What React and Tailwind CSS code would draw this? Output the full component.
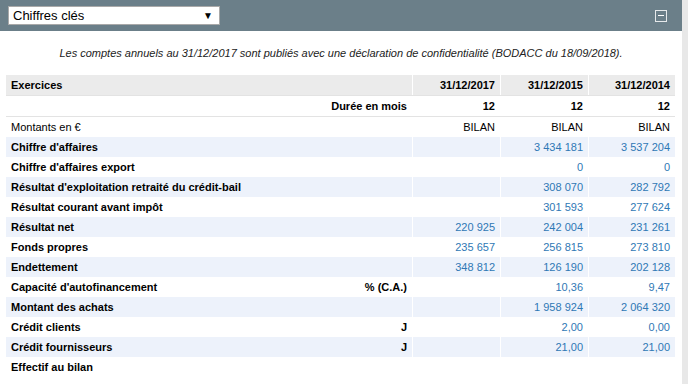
import React from "react";

const rows = [
  { label: "Chiffre d'affaires", unit: "", v: ["", "3 434 181", "3 537 204"], blue: true },
  { label: "Chiffre d'affaires export", unit: "", v: ["", "0", "0"], blue: false },
  { label: "Résultat d'exploitation retraité du crédit-bail", unit: "", v: ["", "308 070", "282 792"], blue: true },
  { label: "Résultat courant avant impôt", unit: "", v: ["", "301 593", "277 624"], blue: false },
  { label: "Résultat net", unit: "", v: ["220 925", "242 004", "231 261"], blue: true },
  { label: "Fonds propres", unit: "", v: ["235 657", "256 815", "273 810"], blue: false },
  { label: "Endettement", unit: "", v: ["348 812", "126 190", "202 128"], blue: true },
  { label: "Capacité d'autofinancement", unit: "% (C.A.)", v: ["", "10,36", "9,47"], blue: false },
  { label: "Montant des achats", unit: "", v: ["", "1 958 924", "2 064 320"], blue: true },
  { label: "Crédit clients", unit: "J", v: ["", "2,00", "0,00"], blue: false },
  { label: "Crédit fournisseurs", unit: "J", v: ["", "21,00", "21,00"], blue: true },
];

export default function App() {
  return (
    <div
      className="flex w-[688px] h-[384px] overflow-hidden bg-white text-[11px] text-black"
      style={{ fontFamily: '"Liberation Sans", Arial, sans-serif' }}
    >
      <div className="w-[682px] flex flex-col">
        <div className="h-[31px] bg-[#6b7f89] flex items-center justify-between pl-[8px] pr-[15px]">
          <div className="w-[212px] h-[19px] bg-white border border-[#a9a9a9] flex items-center justify-between pl-[4px] pr-[6px]">
            <span className="text-[13px] leading-none">Chiffres clés</span>
            <span className="text-[10px] leading-none">▼</span>
          </div>
          <div className="w-[12px] h-[12px] border border-[#e6e9eb] flex items-center justify-center">
            <div className="w-[6px] h-[1px] bg-white"></div>
          </div>
        </div>
        <div className="h-[44px] flex items-center justify-center italic text-[11px] text-[#222]">
          Les comptes annuels au 31/12/2017 sont publiés avec une déclaration de confidentialité (BODACC du 18/09/2018).
        </div>
        <div className="ml-[6px] w-[669px] flex flex-col">
          <div className="grid grid-cols-[406px_88px_88px_87px] h-[20px] bg-[#ebebeb] font-bold">
            <div className="pl-[5px] flex items-center">Exercices</div>
            <div className="border-l border-white pr-[5px] flex items-center justify-end">31/12/2017</div>
            <div className="border-l border-white pr-[5px] flex items-center justify-end">31/12/2015</div>
            <div className="border-l border-white pr-[5px] flex items-center justify-end">31/12/2014</div>
          </div>
          <div className="grid grid-cols-[406px_88px_88px_87px] h-[21px] border-t border-[#e3e3e3] font-bold">
            <div className="pr-[5px] flex items-center justify-end">Durée en mois</div>
            <div className="pr-[5px] flex items-center justify-end">12</div>
            <div className="pr-[5px] flex items-center justify-end">12</div>
            <div className="pr-[5px] flex items-center justify-end">12</div>
          </div>
          <div className="grid grid-cols-[406px_88px_88px_87px] h-[21px] border-t border-[#e3e3e3]">
            <div className="pl-[5px] flex items-center">Montants en €</div>
            <div className="pr-[5px] flex items-center justify-end">BILAN</div>
            <div className="pr-[5px] flex items-center justify-end">BILAN</div>
            <div className="pr-[5px] flex items-center justify-end">BILAN</div>
          </div>
          {rows.map((r, i) => (
            <div
              key={i}
              className={
                "grid grid-cols-[406px_88px_88px_87px] h-[20px] " +
                (r.blue ? "bg-[#edf2fb]" : "bg-white")
              }
            >
              <div className="pl-[5px] pr-[5px] flex items-center justify-between font-bold">
                <span>{r.label}</span>
                <span>{r.unit}</span>
              </div>
              {r.v.map((x, j) => (
                <div
                  key={j}
                  className="border-l border-white pr-[5px] flex items-center justify-end text-[#2f78b5]"
                >
                  {x}
                </div>
              ))}
            </div>
          ))}
          <div className="grid grid-cols-[406px_88px_88px_87px] h-[20px]">
            <div className="pl-[5px] flex items-center font-bold">Effectif au bilan</div>
            <div></div>
            <div></div>
            <div></div>
          </div>
        </div>
      </div>
      <div className="w-[6px] bg-[#e8e8e8]"></div>
    </div>
  );
}
